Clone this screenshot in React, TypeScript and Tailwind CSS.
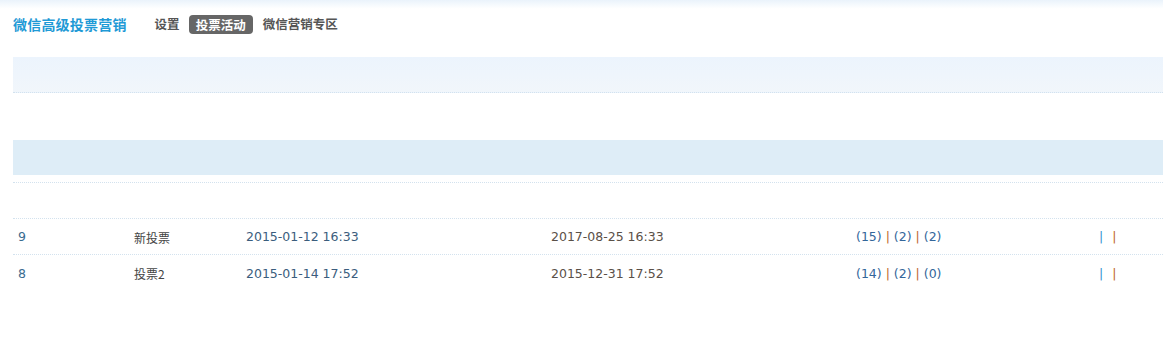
import React from 'react'

const rows = [
  { id: '9', name: '新投票', start: '2015-01-12 16:33', end: '2017-08-25 16:33', a: '15', b: '2', c: '2' },
  { id: '8', name: '投票2', start: '2015-01-14 17:52', end: '2015-12-31 17:52', a: '14', b: '2', c: '0' },
]

const cols = 'grid grid-cols-[115px_112px_305px_307px_238px_1fr]'
const dotted = 'border-b border-dotted border-[#d3e2ee]'

export default function App() {
  return (
    <div className="w-[1163px] h-[356px] bg-white overflow-hidden font-['DejaVu_Sans','Noto_Sans_CJK_SC',sans-serif]">
      {/* header */}
      <div className="h-[48px] bg-gradient-to-b from-[#eaf3fb] via-white via-[18%] to-white pl-[13px] flex items-center">
        <h1 className="text-[14px] font-bold text-[#1f9ad6] font-['Noto_Sans_CJK_SC',sans-serif] tracking-[0.2px]">微信高级投票营销</h1>
        <nav className="flex items-center ml-[28px] text-[12.5px] font-bold text-[#555] font-['Noto_Sans_CJK_SC',sans-serif]">
          <span>设置</span>
          <span className="ml-[9px] bg-[#666] text-white rounded-[4px] px-[7px] h-[19px] leading-[19px]">投票活动</span>
          <span className="ml-[10px]">微信营销专区</span>
        </nav>
      </div>

      <div className="pl-[13px] mt-[9px]">
        <div className={`h-[36px] bg-gradient-to-b from-[#ecf4fd] to-[#f1f6fb] ${dotted}`} />
        <div className="h-[47px]" />
        <div className="h-[35px] bg-[#deedf7]" />
        <div className={`h-[8px] ${dotted}`} />
        <div className={`h-[36px] ${dotted}`} />
        {rows.map((r, i) => (
          <div key={r.id} className={`${cols} h-[36px] items-center pt-[2px] text-[12.5px] ${i === 0 ? dotted : ''}`}>
            <div className="pl-[5px] text-[#3a6b8f]">{r.id}</div>
            <div className="pl-[6px] text-[#444] text-[12px] font-['Noto_Sans_CJK_SC',sans-serif]">{r.name}</div>
            <div className="pl-[6px] text-[#3b5d7d]">{r.start}</div>
            <div className="pl-[6px] text-[#5a5048]">{r.end}</div>
            <div className="pl-[4px] text-[#33669a]">
              ({r.a}) <span className="text-[#c0652a]">|</span> ({r.b}) <span className="text-[#c0652a]">|</span> ({r.c})
            </div>
            <div className="pl-[9px]">
              <span className="text-[#2f8fcf]">|</span>
              <span className="ml-[9px] text-[#c0652a]">|</span>
            </div>
          </div>
        ))}
      </div>
    </div>
  )
}
